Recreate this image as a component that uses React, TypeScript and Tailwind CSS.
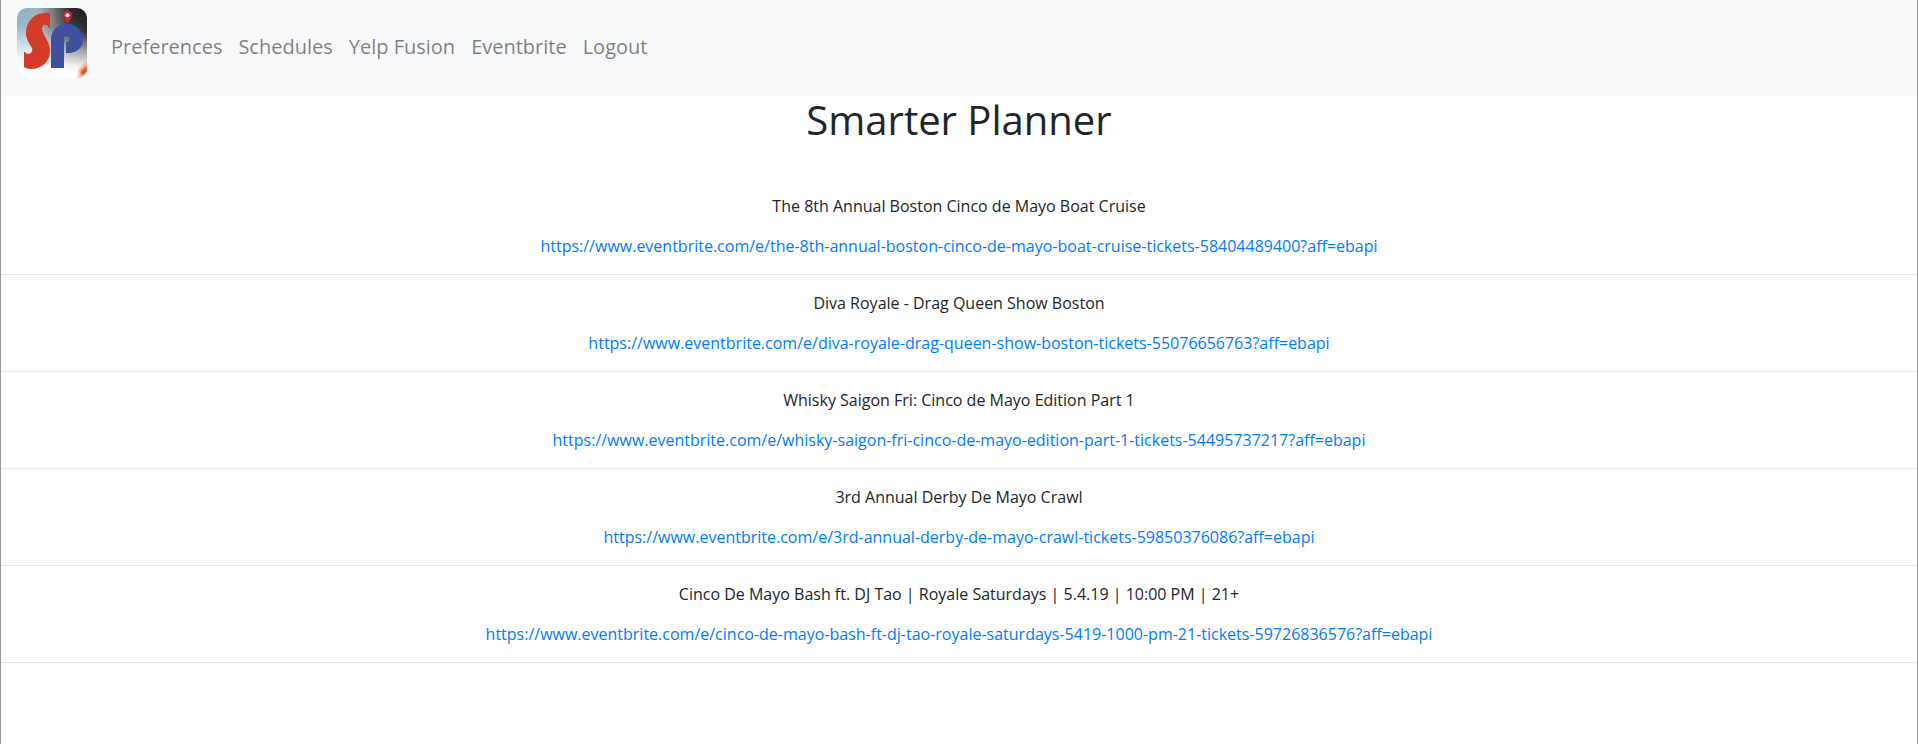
const links = ['Preferences', 'Schedules', 'Yelp Fusion', 'Eventbrite', 'Logout'];

const events = [
  ['The 8th Annual Boston Cinco de Mayo Boat Cruise', 'https://www.eventbrite.com/e/the-8th-annual-boston-cinco-de-mayo-boat-cruise-tickets-58404489400?aff=ebapi'],
  ['Diva Royale - Drag Queen Show Boston', 'https://www.eventbrite.com/e/diva-royale-drag-queen-show-boston-tickets-55076656763?aff=ebapi'],
  ['Whisky Saigon Fri: Cinco de Mayo Edition Part 1', 'https://www.eventbrite.com/e/whisky-saigon-fri-cinco-de-mayo-edition-part-1-tickets-54495737217?aff=ebapi'],
  ['3rd Annual Derby De Mayo Crawl', 'https://www.eventbrite.com/e/3rd-annual-derby-de-mayo-crawl-tickets-59850376086?aff=ebapi'],
  ['Cinco De Mayo Bash ft. DJ Tao | Royale Saturdays | 5.4.19 | 10:00 PM | 21+', 'https://www.eventbrite.com/e/cinco-de-mayo-bash-ft-dj-tao-royale-saturdays-5419-1000-pm-21-tickets-59726836576?aff=ebapi'],
];

function Logo() {
  return (
    <svg className="size-[70px]" viewBox="0 0 70 70">
      <defs>
        <linearGradient id="sky" x1="0" y1="0" x2="1" y2="0">
          <stop offset="0" stopColor="#86b0c2" />
          <stop offset="0.3" stopColor="#a3b4bd" />
          <stop offset="0.5" stopColor="#7d7d80" />
          <stop offset="0.75" stopColor="#2e2c2d" />
          <stop offset="1" stopColor="#1f1d1e" />
        </linearGradient>
        <linearGradient id="fade" x1="0.1" y1="0" x2="0" y2="1">
          <stop offset="0" stopColor="#fff" stopOpacity="0" />
          <stop offset="0.25" stopColor="#fff" stopOpacity="0.1" />
          <stop offset="0.5" stopColor="#fff" stopOpacity="0.55" />
          <stop offset="0.75" stopColor="#fff" stopOpacity="0.95" />
          <stop offset="0.85" stopColor="#fff" />
        </linearGradient>
        <filter id="soft" x="-50%" y="-50%" width="200%" height="200%">
          <feGaussianBlur stdDeviation="1.3" />
        </filter>
        <clipPath id="tile"><rect width="70" height="70" rx="10" /></clipPath>
      </defs>
      <g clipPath="url(#tile)">
        <rect width="70" height="70" fill="url(#sky)" />
        <rect width="70" height="70" fill="url(#fade)" />
        <g filter="url(#soft)">
          <path d="M59 72C64 68 60 62 63 60C66 58 67 53 73 51V72Z" fill="#f7b494" />
          <path d="M64 67C66 65 62 64 64 62C67 61 68 59 72 57V67Z" fill="#ee4c12" />
        </g>
      </g>
      <path d="M33 5V20H32C30 15 25 16 25 21C26 28 33 33 33 43C33 54 24 61 14 61Q10 61 7 59V44H8C10 48 17 45 15 40C13 36 9 32 9 25C9 12 19 3 33 5Z" fill="#d23b29" />
      <path d="M34 60V32C34 22 41 16 50 16C60 16 66 23 66 31C66 40 59 46 49 45V34C54 34.500 54 28 50 28Q47 28 47 31L48.500 32L47 33V60Z" fill="#3f50a0" />
      <path d="M50.500 16L47 9.500A4.300 4.300 0 1 1 54 9.500Z" fill="#d5202c" />
      <circle cx="50.500" cy="7.300" r="2" fill="#fff" />
    </svg>
  );
}

export default function App() {
  return (
    <div className="min-h-[744px] border-x border-[#999] bg-white font-['Open_Sans',sans-serif] text-base leading-6 text-[#212529]">
      <nav className="flex h-24 items-center bg-[#f8f9fa] px-4">
        <a href="#" className="mr-4 h-20"><Logo /></a>
        <div className="flex pb-0.5">
          {links.map((l) => (
            <a key={l} href="#" className="p-2 text-xl leading-[30px] text-black/50">{l}</a>
          ))}
        </div>
      </nav>
      <h1 className="mb-2 text-center text-[40px] leading-[48px]">Smarter Planner</h1>
      <main className="pt-[42px] text-center">
        {events.map(([title, url]) => (
          <section key={url}>
            <p className="mb-4">{title}</p>
            <p><a href="#" className="text-[#007bff]">{url}</a></p>
            <hr className="my-4 border-black/10" />
          </section>
        ))}
      </main>
    </div>
  );
}
